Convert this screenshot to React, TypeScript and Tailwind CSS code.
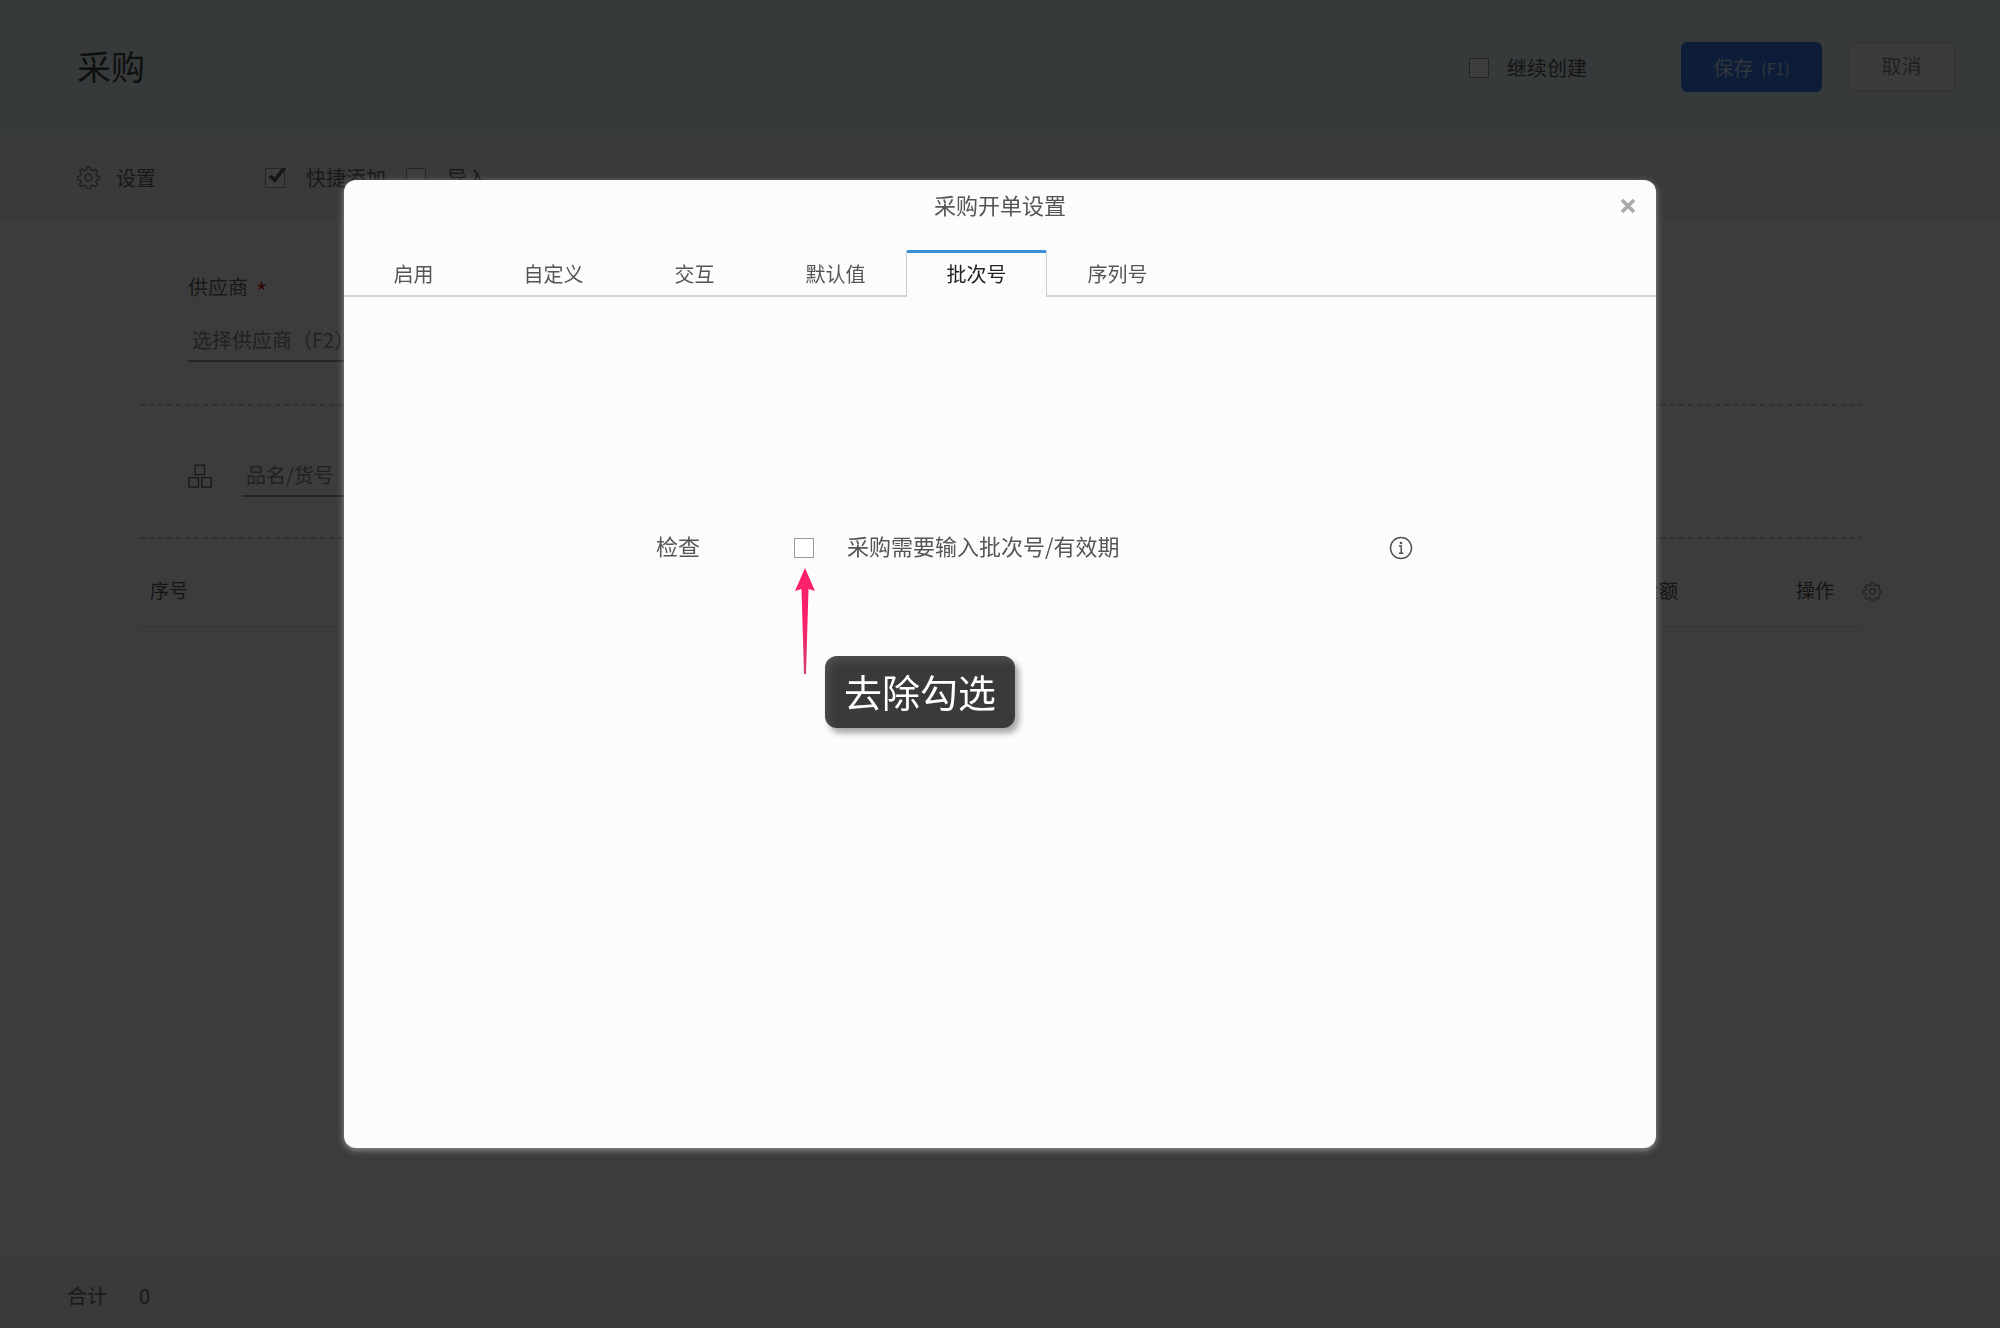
import React from 'react';

const TABS = ['启用', '自定义', '交互', '默认值', '批次号', '序列号'];
const ACTIVE_TAB = '批次号';

const GearIcon: React.FC<{ className?: string }> = ({ className }) => (
  <svg viewBox="0 0 24 24" fill="none" stroke="currentColor" strokeWidth="1.4" strokeLinejoin="round" className={className} aria-hidden="true">
    <path d="M10.400 1h3.200l.7 3.100 2.100.9 2.700-1.700 2.300 2.300-1.700 2.700.9 2.100 3 .7v2.800l-3 .7-.9 2.100 1.700 2.700-2.300 2.300-2.700-1.700-2.100.9-.7 3.100h-3.200l-.7-3.100-2.100-.9-2.700 1.700-2.300-2.300 1.700-2.700-.9-2.100-3-.7v-2.800l3-.7.9-2.100-1.700-2.700 2.300-2.300L7.600 5l2.100-.9z" />
    <circle cx="12" cy="12" r="3.600" />
  </svg>
);

const BoxesIcon: React.FC = () => (
  <svg viewBox="0 0 24 24" fill="none" stroke="currentColor" strokeWidth="1.3" className="size-6 text-[#606060]" aria-hidden="true">
    <path d="M7 1.200h9.500v9.500H7zM1 13.700h9.500v9.500H1zM13.700 13.700h9.500v9.500h-9.500z" />
  </svg>
);

const InfoIcon: React.FC = () => (
  <svg viewBox="0 0 24 24" fill="none" stroke="currentColor" strokeWidth="1.5" className="size-6" aria-hidden="true">
    <circle cx="12" cy="12" r="10.500" />
    <path d="M10 10h2.200v7M10 17.200h4.400" />
    <circle cx="12" cy="7" r="1.300" fill="currentColor" stroke="none" />
  </svg>
);

interface CheckboxProps {
  id: string;
  checked?: boolean;
}

const Checkbox: React.FC<CheckboxProps> = ({ id, checked = false }) => (
  <span className="relative inline-flex size-5 shrink-0">
    <input
      id={id}
      type="checkbox"
      defaultChecked={checked}
      className="peer size-5 appearance-none border border-[#999] bg-white"
    />
    <svg
      viewBox="0 0 20 20"
      fill="#606060"
      className="pointer-events-none absolute inset-0 hidden size-full overflow-visible peer-checked:block"
      aria-hidden="true"
    >
      <path d="M3.500 9l3-2.200L9.500 9.500 17 0h4.500L10 15z" />
    </svg>
  </span>
);

const DashedLine: React.FC = () => (
  <div className="mr-[138px] ml-[140px] h-[2px] bg-[repeating-linear-gradient(90deg,#c8c8c8_0_5px,transparent_5px_9px)]" />
);

const PurchasePage: React.FC = () => (
  <div className="flex min-h-screen flex-col bg-[#fafafa] text-xl leading-7 text-[#686868]">
    <header className="flex h-[133px] items-start bg-[#e3f1f5] pr-11 pl-[77px]">
      <h1 className="mt-[42px] text-[34px] leading-[48px] text-[#444]">采购</h1>
      <div className="mt-[42px] ml-auto flex items-center">
        <span className="flex items-center gap-[18px] pt-[2px]">
          <Checkbox id="keep-creating" />
          <label htmlFor="keep-creating" className="text-[#555]">继续创建</label>
        </span>
        <button className="ml-[94px] flex h-[50px] w-[141px] items-center justify-center gap-2 rounded-md bg-[#3676e8] pt-[2px] text-white/75">
          保存 <span className="text-base">(F1)</span>
        </button>
        <button className="ml-[25px] h-[50px] w-[109px] rounded-md border-2 border-[#dcdcdc] bg-[#f7f7f7] pb-[2px] text-[#888]">取消</button>
      </div>
    </header>

    <div className="flex h-[87px] items-center bg-[#f1f1f1] pt-[2px] pl-[77px]">
      <button className="flex w-[188px] items-center gap-4">
        <GearIcon className="size-[23px] text-[#808080]" />
        设置
      </button>
      <Checkbox id="quick-add" checked />
      <label htmlFor="quick-add" className="ml-[21px]">快捷添加</label>
      <span className="ml-5 flex items-center gap-[21px]">
        <Checkbox id="import" />
        <label htmlFor="import">导入</label>
      </span>
    </div>

    <main className="grow">
      <div className="flex flex-col items-start px-[188px] pt-[53px] pb-[42px]">
        <label htmlFor="supplier" className="flex items-center gap-2">
          供应商 <span className="pt-2 text-2xl leading-5 text-[#d02020]">*</span>
        </label>
        <input
          id="supplier"
          type="text"
          placeholder="选择供应商（F2）"
          className="mt-[18px] h-[43px] w-80 border-b-2 border-[#999] px-1 placeholder:text-[#8a8a8a]"
        />
      </div>
      <DashedLine />
      <div className="flex items-center gap-[30px] px-[188px] pt-12 pb-10">
        <BoxesIcon />
        <input
          type="text"
          aria-label="品名/货号"
          placeholder="品名/货号"
          className="h-[43px] w-80 border-b-2 border-[#999] px-1 placeholder:text-[#8a8a8a]"
        />
      </div>
      <DashedLine />
      <div className="mr-[118px] ml-[140px] flex items-start">
        <table className="w-full text-[19px] text-[#555]">
          <thead>
            <tr className="border-b-2 border-[#ebebeb]">
              <th className="pt-[37px] pb-[22px] pl-[10px] text-left font-normal">序号</th>
              <th className="pt-[37px] pb-[22px] text-right font-normal">金额</th>
              <th className="w-[183px] pt-[37px] pr-[27px] pb-[22px] text-right font-normal">操作</th>
            </tr>
          </thead>
        </table>
        <button className="mt-[43px] ml-[2px] shrink-0" aria-label="设置">
          <GearIcon className="size-[19px] text-[#808080]" />
        </button>
      </div>
    </main>

    <footer className="flex h-[66px] items-center gap-8 bg-[#f1f1f1] pt-[2px] pl-[67px]">
      <span>合计</span>
      <span>0</span>
    </footer>
  </div>
);

const UncheckHint: React.FC = () => (
  <>
    <svg viewBox="0 0 22 106" className="absolute top-[30px] left-0 h-[106px] w-[22px]" aria-hidden="true">
      <defs>
        <linearGradient id="arrow-fill" x1="0" y1="0" x2="0" y2="1">
          <stop offset="0.500" stopColor="#fb2168" />
          <stop offset="1" stopColor="#cf3d72" />
        </linearGradient>
      </defs>
      <path d="M11 0l10 23-6.500-2L12 106h-2L7.500 21 1 23z" fill="url(#arrow-fill)" />
    </svg>
    <div className="absolute top-[118px] left-[31px] rounded-xl bg-[#3a3a3a] px-[19px] pt-[11px] pb-[13px] text-[38px] leading-[48px] whitespace-nowrap text-white shadow-[4px_5px_6px_rgba(0,0,0,0.35),inset_4px_5px_8px_rgba(255,255,255,0.1)]">
      去除勾选
    </div>
  </>
);

const SettingsDialog: React.FC = () => (
  <div className="fixed inset-0 flex items-center justify-center bg-black/76">
    <section
      role="dialog"
      aria-labelledby="dialog-title"
      className="w-full max-w-[1312px] rounded-xl bg-[#fcfcfc] text-[#555] shadow-[0_2px_6px_rgba(255,255,255,0.45)]"
    >
      <header className="relative h-[70px] pt-[10px] text-center">
        <h2 id="dialog-title" className="text-[22px] leading-7">采购开单设置</h2>
        <button className="absolute top-[18px] right-5" aria-label="关闭">
          <svg viewBox="0 0 16 16" stroke="#a9a9a9" strokeWidth="3.500" className="size-4" aria-hidden="true">
            <path d="M2 2l12 12M14 2L2 14" />
          </svg>
        </button>
      </header>

      <div role="tablist" className="flex h-[47px] text-xl leading-7">
        {TABS.map((tab) =>
          tab === ACTIVE_TAB ? (
            <button
              key={tab}
              role="tab"
              aria-selected="true"
              className="w-[141px] rounded-t-xs border-x border-t-3 border-x-[#ccc] border-t-[#3a8dd8] pb-[2px] text-[#222]"
            >
              {tab}
            </button>
          ) : (
            <button
              key={tab}
              role="tab"
              aria-selected="false"
              className="w-[141px] border-b-2 border-[#d4d4d4] pt-[2px] first:w-[139px]"
            >
              {tab}
            </button>
          )
        )}
        <div className="grow border-b-2 border-[#d4d4d4]" />
      </div>

      <div role="tabpanel" className="min-h-[851px] pt-[236px] pr-[243px] pl-[312px] text-[22px] leading-6">
        <div className="flex items-center">
          <span className="w-[138px] pb-[6px]">检查</span>
          <span className="relative flex">
            <Checkbox id="require-batch" />
            <UncheckHint />
          </span>
          <label htmlFor="require-batch" className="ml-[33px] pb-[6px]">采购需要输入批次号/有效期</label>
          <button className="ml-auto" aria-label="说明">
            <InfoIcon />
          </button>
        </div>
      </div>
    </section>
  </div>
);

export default function App() {
  return (
    <div className="font-['Noto_Sans_CJK_SC',sans-serif]">
      <PurchasePage />
      <SettingsDialog />
    </div>
  );
}
